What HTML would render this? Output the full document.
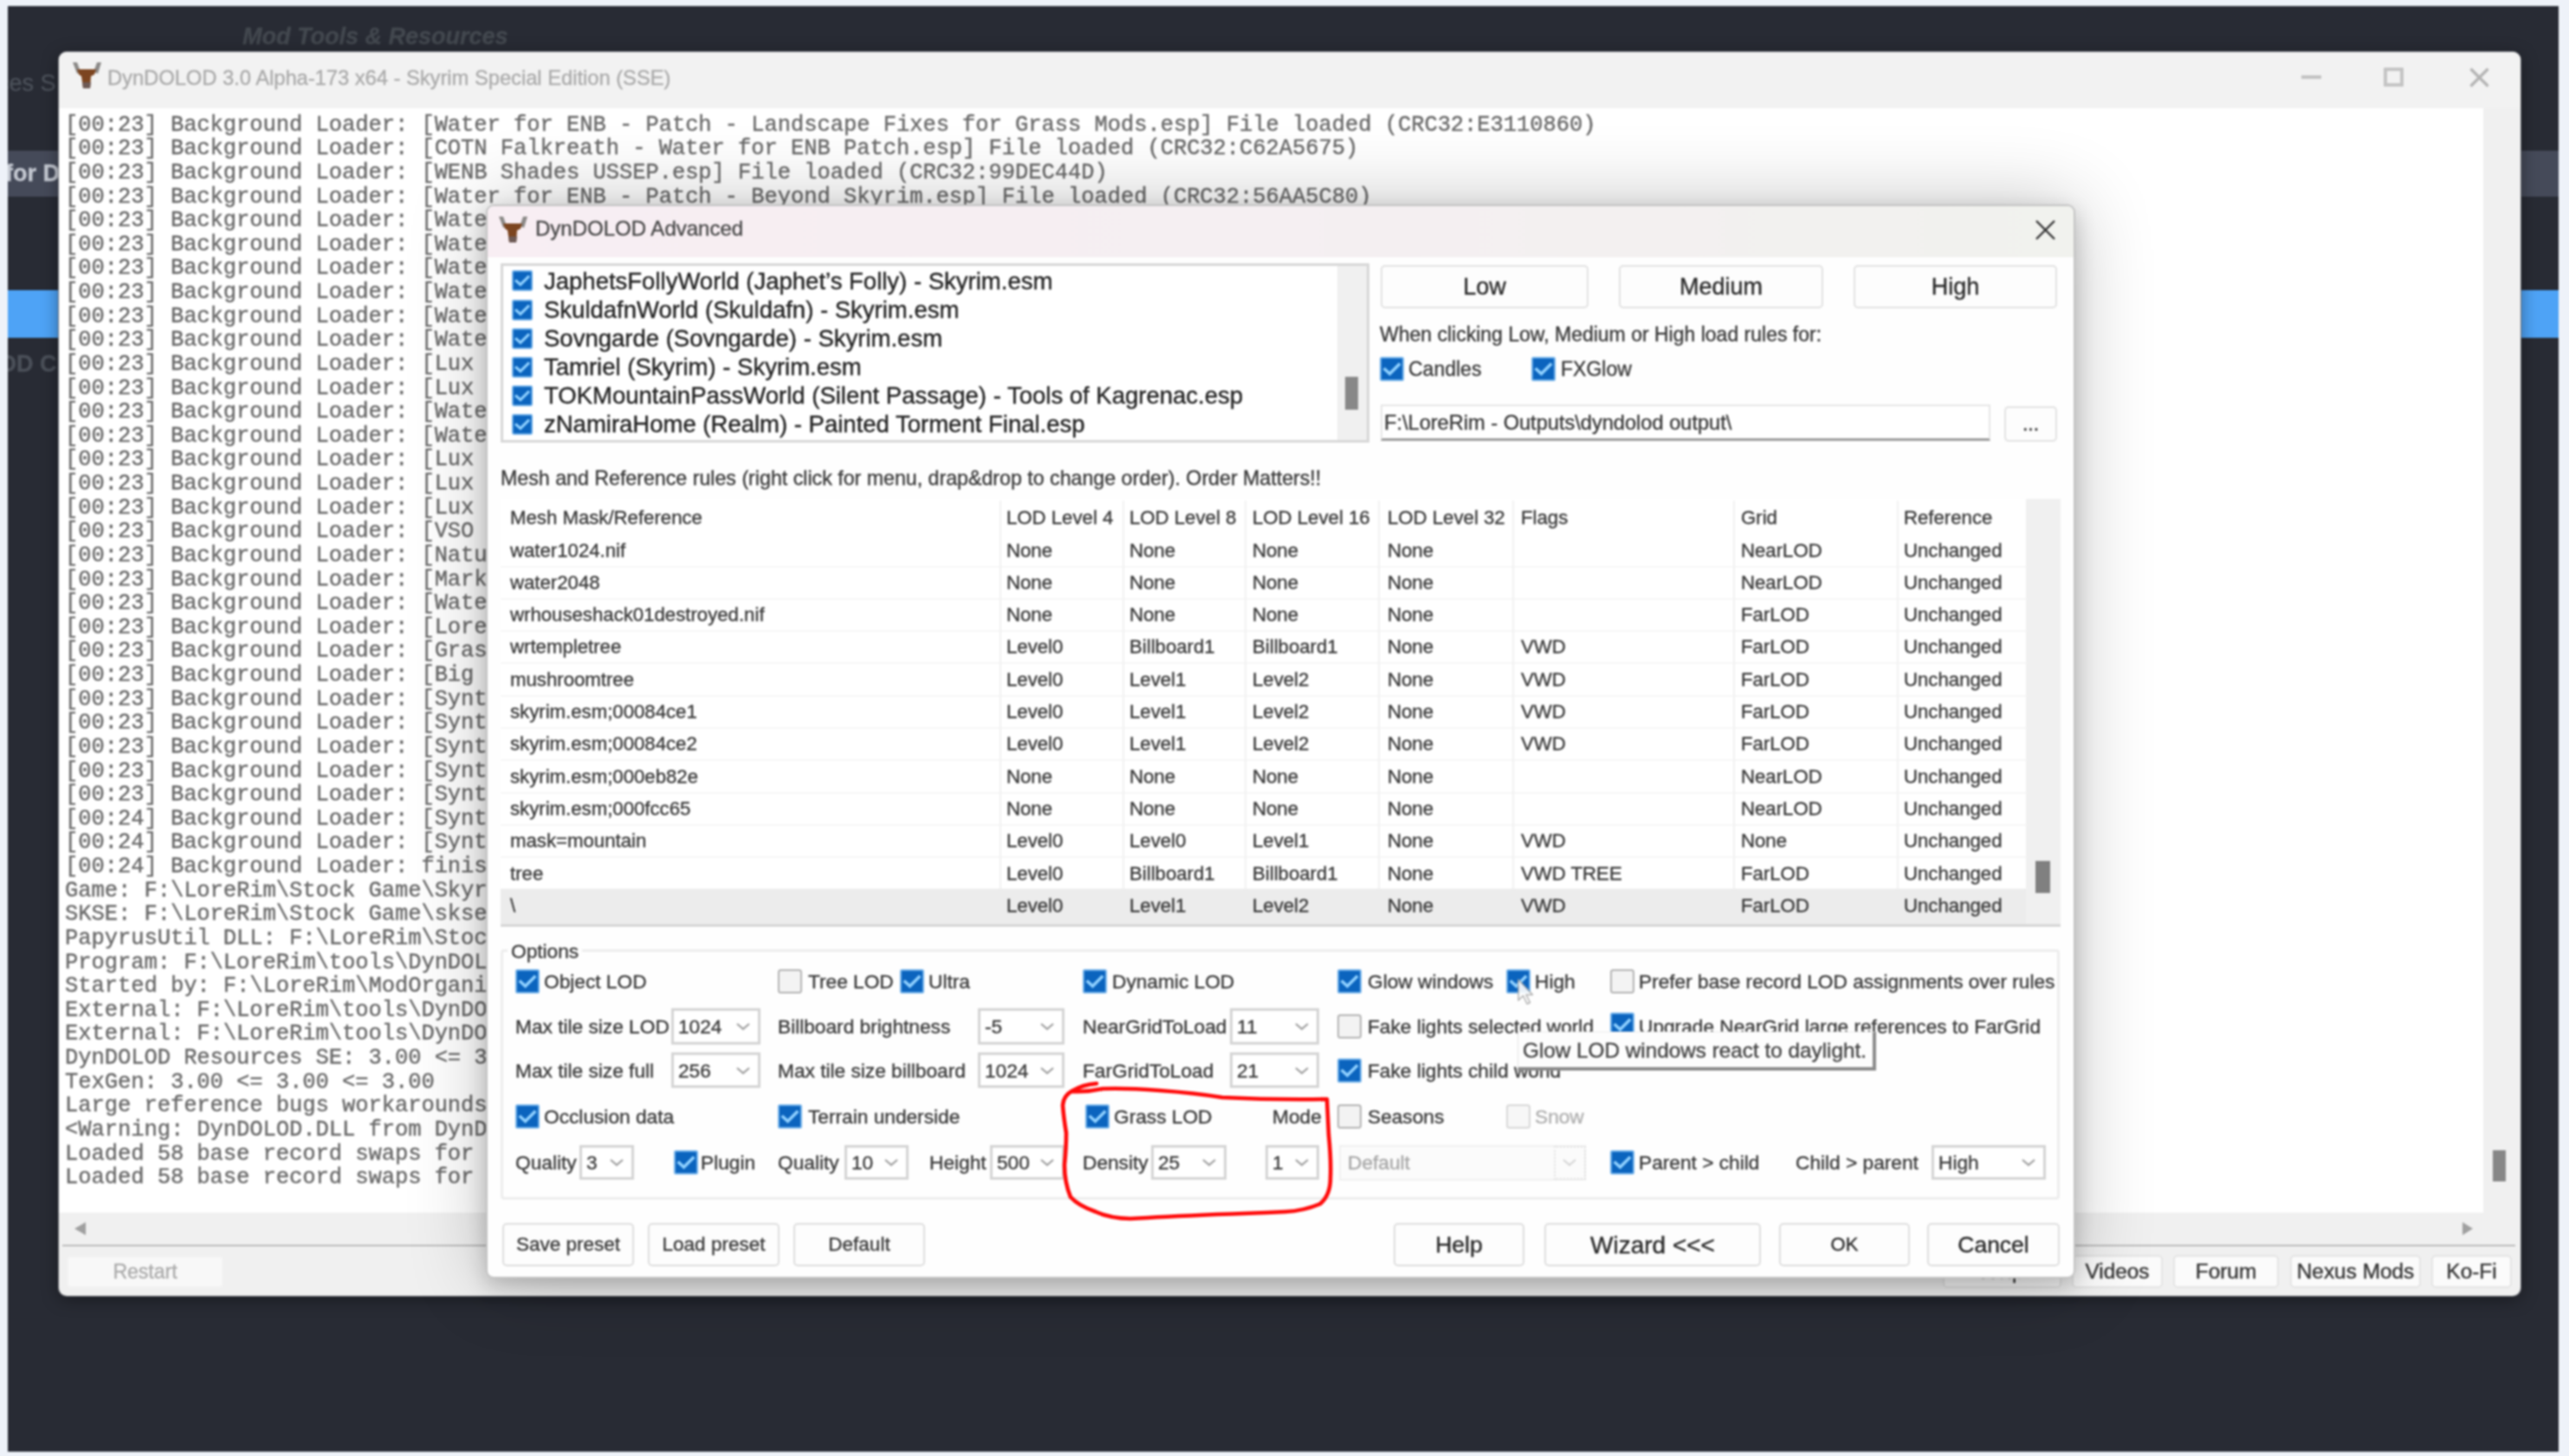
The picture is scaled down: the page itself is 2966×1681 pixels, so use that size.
<!DOCTYPE html><html><head><meta charset="utf-8"><style>html,body{margin:0;padding:0;width:2966px;height:1681px;overflow:hidden;background:#eef2f9;font-family:'Liberation Sans', sans-serif;} .t{-webkit-text-stroke:0.35px currentColor;}</style></head><body><div id="wrap" style="position:absolute;left:0;top:0;width:2966px;height:1681px;overflow:hidden;filter:blur(1px)">
<div style="position:absolute;left:9px;top:7px;width:2945px;height:1669px;background:#282b34"></div>
<div class="t" style="position:absolute;left:280px;top:25.0px;height:34px;line-height:34px;font-size:27px;color:#43484f;white-space:pre;text-align:left;font-weight:bold;font-style:italic">Mod Tools &amp; Resources</div>
<div style="position:absolute;left:9px;top:0;width:59px;height:1681px;overflow:hidden">
<div style="position:absolute;left:-9px;top:0;width:100px;height:1681px">
<div class="t" style="position:absolute;left:-3px;top:79.0px;height:34px;line-height:34px;font-size:27px;color:#4b5059;white-space:pre;text-align:left;">ces S</div>
<div style="position:absolute;left:0px;top:174px;width:100px;height:53px;background:#454a59"></div>
<div class="t" style="position:absolute;left:6px;top:183.0px;height:34px;line-height:34px;font-size:27px;color:#c5c9d2;white-space:pre;text-align:left;font-weight:bold">for D</div>
<div style="position:absolute;left:0px;top:335px;width:100px;height:55px;background:#4ea3f6"></div>
<div class="t" style="position:absolute;left:-2px;top:403.0px;height:34px;line-height:34px;font-size:27px;color:#4b5059;white-space:pre;text-align:left;font-weight:bold">OD C</div>
</div></div>
<div style="position:absolute;left:2910px;top:174px;width:44px;height:53px;background:#454a59"></div>
<div style="position:absolute;left:2910px;top:335px;width:44px;height:55px;background:#4ea3f6"></div>
<div style="position:absolute;left:68px;top:60px;width:2842px;height:1436px;border-radius:9px;background:#f0f0f0;box-shadow:0 0 0 1px #6b6e74, 0 4px 20px rgba(0,0,0,0.4)"></div>
<div style="position:absolute;left:68px;top:60px;width:2842px;height:65px;background:#f2f2f2;border-radius:9px 9px 0 0"></div>
<svg style="position:absolute;left:76px;top:66px" width="50" height="44" viewBox="0 0 50 44"><path d="M8 6 L13 6 L17 17 L13 19 Z" fill="#8c8a88"/><path d="M36 6 L41 6 L37 19 L32 17 Z" fill="#8c8a88"/><path d="M13 14 L35 14 L33 20 L29 22 L28 36 L20 36 L18 22 L15 20 Z" fill="#7c4520"/><path d="M19 29 L29 29 L28 36 L20 36 Z" fill="#6e5a55"/></svg>
<div class="t" style="position:absolute;left:124px;top:75.0px;height:30px;line-height:30px;font-size:23.7px;color:#ababab;white-space:pre;text-align:left;">DynDOLOD 3.0 Alpha-173 x64 - Skyrim Special Edition (SSE)</div>
<div style="position:absolute;left:2657px;top:87px;width:23px;height:4px;background:#c2c2c2"></div>
<div style="position:absolute;left:2752px;top:78px;width:23px;height:22px;box-sizing:border-box;border:4px solid #c4c4c4;border-radius:1px"></div>
<svg style="position:absolute;left:2851px;top:78px" width="23" height="23" viewBox="0 0 23 23"><path d="M1.5 1.5 L21.5 21.5 M21.5 1.5 L1.5 21.5" stroke="#b4b4b4" stroke-width="3.2"/></svg>
<div style="position:absolute;left:68px;top:125px;width:2799px;height:1275px;background:#ffffff"></div>
<div style="position:absolute;left:2867px;top:125px;width:43px;height:1275px;background:#f0f0f0"></div>
<div style="position:absolute;left:2878px;top:1328px;width:15px;height:36px;background:#878787"></div>
<div style="position:absolute;left:68px;top:1400px;width:2799px;height:38px;background:#f0f0f0"></div>
<svg style="position:absolute;left:86px;top:1411px" width="14" height="15" viewBox="0 0 14 15"><path d="M13 0 L0 7.5 L13 15Z" fill="#a0a0a0"/></svg>
<svg style="position:absolute;left:2843px;top:1411px" width="12" height="15" viewBox="0 0 12 15"><path d="M0 0 L12 7.5 L0 15Z" fill="#a0a0a0"/></svg>
<div style="position:absolute;left:72px;top:1437px;width:2832px;height:2px;background:#bdbdbd"></div>
<div style="position:absolute;left:77px;top:1450px;width:181px;height:37px;box-sizing:border-box;border:2px solid #f3f3f3;border-radius:5px;background:#f8f8f8"></div>
<div class="t" style="position:absolute;left:77px;top:1454.0px;width:181px;height:29px;line-height:29px;font-size:23px;color:#ababab;white-space:pre;text-align:center;">Restart</div>
<div style="position:absolute;left:2243px;top:1449px;width:137px;height:38px;box-sizing:border-box;border:2px solid #e4e4e4;border-radius:5px;background:#fbfbfb"></div>
<div class="t" style="position:absolute;left:2243px;top:1453.0px;width:137px;height:30px;line-height:30px;font-size:24.4px;color:#333;white-space:pre;text-align:center;">Help</div>
<div style="position:absolute;left:2392px;top:1449px;width:105px;height:38px;box-sizing:border-box;border:2px solid #e4e4e4;border-radius:5px;background:#fbfbfb"></div>
<div class="t" style="position:absolute;left:2392px;top:1453.0px;width:105px;height:30px;line-height:30px;font-size:24.4px;color:#333;white-space:pre;text-align:center;">Videos</div>
<div style="position:absolute;left:2509px;top:1449px;width:122px;height:38px;box-sizing:border-box;border:2px solid #e4e4e4;border-radius:5px;background:#fbfbfb"></div>
<div class="t" style="position:absolute;left:2509px;top:1453.0px;width:122px;height:30px;line-height:30px;font-size:24.4px;color:#333;white-space:pre;text-align:center;">Forum</div>
<div style="position:absolute;left:2644px;top:1449px;width:151px;height:38px;box-sizing:border-box;border:2px solid #e4e4e4;border-radius:5px;background:#fbfbfb"></div>
<div class="t" style="position:absolute;left:2644px;top:1453.0px;width:151px;height:30px;line-height:30px;font-size:24.4px;color:#333;white-space:pre;text-align:center;">Nexus Mods</div>
<div style="position:absolute;left:2807px;top:1449px;width:93px;height:38px;box-sizing:border-box;border:2px solid #e4e4e4;border-radius:5px;background:#fbfbfb"></div>
<div class="t" style="position:absolute;left:2807px;top:1453.0px;width:93px;height:30px;line-height:30px;font-size:24.4px;color:#333;white-space:pre;text-align:center;">Ko-Fi</div>
<div style="position:absolute;left:75px;top:125px;width:2790px;height:1275px;overflow:hidden">
<div style="position:absolute;left:0;top:5.69px;font-family:'Liberation Mono', monospace;font-size:25.4px;line-height:27.63px;color:#6a6a6a;-webkit-text-stroke:0.4px #6a6a6a;white-space:pre">[00:23] Background Loader: [Water for ENB - Patch - Landscape Fixes for Grass Mods.esp] File loaded (CRC32:E3110860)
[00:23] Background Loader: [COTN Falkreath - Water for ENB Patch.esp] File loaded (CRC32:C62A5675)
[00:23] Background Loader: [WENB Shades USSEP.esp] File loaded (CRC32:99DEC44D)
[00:23] Background Loader: [Water for ENB - Patch - Beyond Skyrim.esp] File loaded (CRC32:56AA5C80)
[00:23] Background Loader: [Water
[00:23] Background Loader: [Water
[00:23] Background Loader: [Water
[00:23] Background Loader: [Water
[00:23] Background Loader: [Water
[00:23] Background Loader: [Water
[00:23] Background Loader: [Lux O
[00:23] Background Loader: [Lux O
[00:23] Background Loader: [Water
[00:23] Background Loader: [Water
[00:23] Background Loader: [Lux O
[00:23] Background Loader: [Lux O
[00:23] Background Loader: [Lux O
[00:23] Background Loader: [VSO -
[00:23] Background Loader: [Natur
[00:23] Background Loader: [Marke
[00:23] Background Loader: [Water
[00:23] Background Loader: [LoreR
[00:23] Background Loader: [Grass
[00:23] Background Loader: [Big T
[00:23] Background Loader: [Synth
[00:23] Background Loader: [Synth
[00:23] Background Loader: [Synth
[00:23] Background Loader: [Synth
[00:23] Background Loader: [Synth
[00:24] Background Loader: [Synth
[00:24] Background Loader: [Synth
[00:24] Background Loader: finishe
Game: F:\LoreRim\Stock Game\Skyrim
SKSE: F:\LoreRim\Stock Game\skse6
PapyrusUtil DLL: F:\LoreRim\Stock 
Program: F:\LoreRim\tools\DynDOLOD
Started by: F:\LoreRim\ModOrganize
External: F:\LoreRim\tools\DynDOL
External: F:\LoreRim\tools\DynDOL
DynDOLOD Resources SE: 3.00 &lt;= 3.0
TexGen: 3.00 &lt;= 3.00 &lt;= 3.00
Large reference bugs workarounds 
&lt;Warning: DynDOLOD.DLL from DynDOL
Loaded 58 base record swaps for 
Loaded 58 base record swaps for </div>
</div>
<div style="position:absolute;left:561px;top:236px;width:1835px;height:1240px;box-sizing:border-box;border:2px solid #c4c4c4;border-radius:9px;background:#fefefe;box-shadow:0 8px 24px rgba(0,0,0,0.2), 0 0 90px rgba(0,0,0,0.24)"></div>
<div style="position:absolute;left:563px;top:238px;width:1831px;height:59px;background:linear-gradient(90deg,#f8eef3 0%,#f5eff2 50%,#f1f2ee 100%);border-radius:8px 8px 0 0"></div>
<svg style="position:absolute;left:568px;top:244px" width="50" height="44" viewBox="0 0 50 44"><path d="M8 6 L13 6 L17 17 L13 19 Z" fill="#8c8a88"/><path d="M36 6 L41 6 L37 19 L32 17 Z" fill="#8c8a88"/><path d="M13 14 L35 14 L33 20 L29 22 L28 36 L20 36 L18 22 L15 20 Z" fill="#7c4520"/><path d="M19 29 L29 29 L28 36 L20 36 Z" fill="#6e5a55"/></svg>
<div class="t" style="position:absolute;left:618px;top:249.0px;height:30px;line-height:30px;font-size:24px;color:#4a4a4a;white-space:pre;text-align:left;">DynDOLOD Advanced</div>
<svg style="position:absolute;left:2350px;top:254px" width="23" height="23" viewBox="0 0 23 23"><path d="M1 1 L22 22 M22 1 L1 22" stroke="#333" stroke-width="2.4"/></svg>
<div style="position:absolute;left:578px;top:304px;width:1003px;height:207px;box-sizing:border-box;border:3px solid #d7d7d7;background:#fff"></div>
<div style="position:absolute;left:1544px;top:307px;width:34px;height:201px;background:#f0f0f0"></div>
<div style="position:absolute;left:1553px;top:435px;width:15px;height:38px;background:#888"></div>
<svg style="position:absolute;left:591px;top:312px" width="24" height="24" viewBox="0 0 28 28"><rect x="1" y="1" width="26" height="26" rx="1.5" fill="#0b64be" stroke="#6fb0ea" stroke-width="2"/><path d="M6 14.5 L11.5 19.5 L22 9" fill="none" stroke="#8fd0ff" stroke-width="3.6" stroke-linecap="square"/></svg>
<div class="t" style="position:absolute;left:628px;top:307.5px;height:34px;line-height:34px;font-size:27.5px;color:#222;white-space:pre;text-align:left;">JaphetsFollyWorld (Japhet’s Folly) - Skyrim.esm</div>
<svg style="position:absolute;left:591px;top:346px" width="24" height="24" viewBox="0 0 28 28"><rect x="1" y="1" width="26" height="26" rx="1.5" fill="#0b64be" stroke="#6fb0ea" stroke-width="2"/><path d="M6 14.5 L11.5 19.5 L22 9" fill="none" stroke="#8fd0ff" stroke-width="3.6" stroke-linecap="square"/></svg>
<div class="t" style="position:absolute;left:628px;top:340.6px;height:34px;line-height:34px;font-size:27.5px;color:#222;white-space:pre;text-align:left;">SkuldafnWorld (Skuldafn) - Skyrim.esm</div>
<svg style="position:absolute;left:591px;top:379px" width="24" height="24" viewBox="0 0 28 28"><rect x="1" y="1" width="26" height="26" rx="1.5" fill="#0b64be" stroke="#6fb0ea" stroke-width="2"/><path d="M6 14.5 L11.5 19.5 L22 9" fill="none" stroke="#8fd0ff" stroke-width="3.6" stroke-linecap="square"/></svg>
<div class="t" style="position:absolute;left:628px;top:373.7px;height:34px;line-height:34px;font-size:27.5px;color:#222;white-space:pre;text-align:left;">Sovngarde (Sovngarde) - Skyrim.esm</div>
<svg style="position:absolute;left:591px;top:412px" width="24" height="24" viewBox="0 0 28 28"><rect x="1" y="1" width="26" height="26" rx="1.5" fill="#0b64be" stroke="#6fb0ea" stroke-width="2"/><path d="M6 14.5 L11.5 19.5 L22 9" fill="none" stroke="#8fd0ff" stroke-width="3.6" stroke-linecap="square"/></svg>
<div class="t" style="position:absolute;left:628px;top:406.8px;height:34px;line-height:34px;font-size:27.5px;color:#222;white-space:pre;text-align:left;">Tamriel (Skyrim) - Skyrim.esm</div>
<svg style="position:absolute;left:591px;top:445px" width="24" height="24" viewBox="0 0 28 28"><rect x="1" y="1" width="26" height="26" rx="1.5" fill="#0b64be" stroke="#6fb0ea" stroke-width="2"/><path d="M6 14.5 L11.5 19.5 L22 9" fill="none" stroke="#8fd0ff" stroke-width="3.6" stroke-linecap="square"/></svg>
<div class="t" style="position:absolute;left:628px;top:439.9px;height:34px;line-height:34px;font-size:27.5px;color:#222;white-space:pre;text-align:left;">TOKMountainPassWorld (Silent Passage) - Tools of Kagrenac.esp</div>
<svg style="position:absolute;left:591px;top:478px" width="24" height="24" viewBox="0 0 28 28"><rect x="1" y="1" width="26" height="26" rx="1.5" fill="#0b64be" stroke="#6fb0ea" stroke-width="2"/><path d="M6 14.5 L11.5 19.5 L22 9" fill="none" stroke="#8fd0ff" stroke-width="3.6" stroke-linecap="square"/></svg>
<div class="t" style="position:absolute;left:628px;top:473.0px;height:34px;line-height:34px;font-size:27.5px;color:#222;white-space:pre;text-align:left;">zNamiraHome (Realm) - Painted Torment Final.esp</div>
<div style="position:absolute;left:1594px;top:306px;width:240px;height:50px;box-sizing:border-box;border:2px solid #e2e2e2;border-radius:5px;background:#fdfdfd"></div>
<div class="t" style="position:absolute;left:1594px;top:314.0px;width:240px;height:34px;line-height:34px;font-size:27px;color:#2a2a2a;white-space:pre;text-align:center;">Low</div>
<div style="position:absolute;left:1869px;top:306px;width:236px;height:50px;box-sizing:border-box;border:2px solid #e2e2e2;border-radius:5px;background:#fdfdfd"></div>
<div class="t" style="position:absolute;left:1869px;top:314.0px;width:236px;height:34px;line-height:34px;font-size:27px;color:#2a2a2a;white-space:pre;text-align:center;">Medium</div>
<div style="position:absolute;left:2140px;top:306px;width:235px;height:50px;box-sizing:border-box;border:2px solid #e2e2e2;border-radius:5px;background:#fdfdfd"></div>
<div class="t" style="position:absolute;left:2140px;top:314.0px;width:235px;height:34px;line-height:34px;font-size:27px;color:#2a2a2a;white-space:pre;text-align:center;">High</div>
<div class="t" style="position:absolute;left:1593px;top:371.5px;height:29px;line-height:29px;font-size:23px;color:#3a3a3a;white-space:pre;text-align:left;">When clicking Low, Medium or High load rules for:</div>
<svg style="position:absolute;left:1593px;top:412px" width="28" height="28" viewBox="0 0 28 28"><rect x="1" y="1" width="26" height="26" rx="1.5" fill="#0b64be" stroke="#6fb0ea" stroke-width="2"/><path d="M6 14.5 L11.5 19.5 L22 9" fill="none" stroke="#8fd0ff" stroke-width="3.6" stroke-linecap="square"/></svg>
<div class="t" style="position:absolute;left:1626px;top:411.5px;height:29px;line-height:29px;font-size:23px;color:#3a3a3a;white-space:pre;text-align:left;">Candles</div>
<svg style="position:absolute;left:1768px;top:412px" width="28" height="28" viewBox="0 0 28 28"><rect x="1" y="1" width="26" height="26" rx="1.5" fill="#0b64be" stroke="#6fb0ea" stroke-width="2"/><path d="M6 14.5 L11.5 19.5 L22 9" fill="none" stroke="#8fd0ff" stroke-width="3.6" stroke-linecap="square"/></svg>
<div class="t" style="position:absolute;left:1802px;top:411.5px;height:29px;line-height:29px;font-size:23px;color:#3a3a3a;white-space:pre;text-align:left;">FXGlow</div>
<div style="position:absolute;left:1594px;top:467px;width:704px;height:42px;box-sizing:border-box;border:2px solid #e6e6e6;border-bottom:3px solid #9c9c9c;background:#fff"></div>
<div class="t" style="position:absolute;left:1598px;top:473.0px;height:30px;line-height:30px;font-size:23.6px;color:#3a3a3a;white-space:pre;text-align:left;">F:\LoreRim - Outputs\dyndolod output\</div>
<div style="position:absolute;left:2314px;top:469px;width:61px;height:41px;box-sizing:border-box;border:2px solid #e2e2e2;border-radius:5px;background:#fdfdfd"></div>
<div class="t" style="position:absolute;left:2314px;top:475.0px;width:61px;height:29px;line-height:29px;font-size:23px;color:#333;white-space:pre;text-align:center;">...</div>
<div class="t" style="position:absolute;left:578px;top:537.5px;height:29px;line-height:29px;font-size:23.2px;color:#3a3a3a;white-space:pre;text-align:left;">Mesh and Reference rules (right click for menu, drap&amp;drop to change order). Order Matters!!</div>
<div style="position:absolute;left:578px;top:576px;width:1801px;height:494px;background:#fff"></div>
<div style="position:absolute;left:1154px;top:578px;width:2px;height:450px;background:#f1f1f1"></div>
<div style="position:absolute;left:1296px;top:578px;width:2px;height:450px;background:#f1f1f1"></div>
<div style="position:absolute;left:1437px;top:578px;width:2px;height:450px;background:#f1f1f1"></div>
<div style="position:absolute;left:1591px;top:578px;width:2px;height:450px;background:#f1f1f1"></div>
<div style="position:absolute;left:1746px;top:578px;width:2px;height:450px;background:#f1f1f1"></div>
<div style="position:absolute;left:2001px;top:578px;width:2px;height:450px;background:#f1f1f1"></div>
<div style="position:absolute;left:2190px;top:578px;width:2px;height:450px;background:#f1f1f1"></div>
<div class="t" style="position:absolute;left:589px;top:584.0px;height:28px;line-height:28px;font-size:22.2px;color:#3a3a3a;white-space:pre;text-align:left;">Mesh Mask/Reference</div>
<div class="t" style="position:absolute;left:1162px;top:584.0px;height:28px;line-height:28px;font-size:22.2px;color:#3a3a3a;white-space:pre;text-align:left;">LOD Level 4</div>
<div class="t" style="position:absolute;left:1304px;top:584.0px;height:28px;line-height:28px;font-size:22.2px;color:#3a3a3a;white-space:pre;text-align:left;">LOD Level 8</div>
<div class="t" style="position:absolute;left:1446px;top:584.0px;height:28px;line-height:28px;font-size:22.2px;color:#3a3a3a;white-space:pre;text-align:left;">LOD Level 16</div>
<div class="t" style="position:absolute;left:1602px;top:584.0px;height:28px;line-height:28px;font-size:22.2px;color:#3a3a3a;white-space:pre;text-align:left;">LOD Level 32</div>
<div class="t" style="position:absolute;left:1756px;top:584.0px;height:28px;line-height:28px;font-size:22.2px;color:#3a3a3a;white-space:pre;text-align:left;">Flags</div>
<div class="t" style="position:absolute;left:2010px;top:584.0px;height:28px;line-height:28px;font-size:22.2px;color:#3a3a3a;white-space:pre;text-align:left;">Grid</div>
<div class="t" style="position:absolute;left:2198px;top:584.0px;height:28px;line-height:28px;font-size:22.2px;color:#3a3a3a;white-space:pre;text-align:left;">Reference</div>
<div style="position:absolute;left:578px;top:654px;width:1761px;height:1px;background:#f0f0f0"></div>
<div class="t" style="position:absolute;left:589px;top:621.5px;height:28px;line-height:28px;font-size:22.2px;color:#3a3a3a;white-space:pre;text-align:left;">water1024.nif</div>
<div class="t" style="position:absolute;left:1162px;top:621.5px;height:28px;line-height:28px;font-size:22.2px;color:#3a3a3a;white-space:pre;text-align:left;">None</div>
<div class="t" style="position:absolute;left:1304px;top:621.5px;height:28px;line-height:28px;font-size:22.2px;color:#3a3a3a;white-space:pre;text-align:left;">None</div>
<div class="t" style="position:absolute;left:1446px;top:621.5px;height:28px;line-height:28px;font-size:22.2px;color:#3a3a3a;white-space:pre;text-align:left;">None</div>
<div class="t" style="position:absolute;left:1602px;top:621.5px;height:28px;line-height:28px;font-size:22.2px;color:#3a3a3a;white-space:pre;text-align:left;">None</div>
<div class="t" style="position:absolute;left:1756px;top:621.5px;height:28px;line-height:28px;font-size:22.2px;color:#3a3a3a;white-space:pre;text-align:left;"></div>
<div class="t" style="position:absolute;left:2010px;top:621.5px;height:28px;line-height:28px;font-size:22.2px;color:#3a3a3a;white-space:pre;text-align:left;">NearLOD</div>
<div class="t" style="position:absolute;left:2198px;top:621.5px;height:28px;line-height:28px;font-size:22.2px;color:#3a3a3a;white-space:pre;text-align:left;">Unchanged</div>
<div style="position:absolute;left:578px;top:691px;width:1761px;height:1px;background:#f0f0f0"></div>
<div class="t" style="position:absolute;left:589px;top:658.8px;height:28px;line-height:28px;font-size:22.2px;color:#3a3a3a;white-space:pre;text-align:left;">water2048</div>
<div class="t" style="position:absolute;left:1162px;top:658.8px;height:28px;line-height:28px;font-size:22.2px;color:#3a3a3a;white-space:pre;text-align:left;">None</div>
<div class="t" style="position:absolute;left:1304px;top:658.8px;height:28px;line-height:28px;font-size:22.2px;color:#3a3a3a;white-space:pre;text-align:left;">None</div>
<div class="t" style="position:absolute;left:1446px;top:658.8px;height:28px;line-height:28px;font-size:22.2px;color:#3a3a3a;white-space:pre;text-align:left;">None</div>
<div class="t" style="position:absolute;left:1602px;top:658.8px;height:28px;line-height:28px;font-size:22.2px;color:#3a3a3a;white-space:pre;text-align:left;">None</div>
<div class="t" style="position:absolute;left:1756px;top:658.8px;height:28px;line-height:28px;font-size:22.2px;color:#3a3a3a;white-space:pre;text-align:left;"></div>
<div class="t" style="position:absolute;left:2010px;top:658.8px;height:28px;line-height:28px;font-size:22.2px;color:#3a3a3a;white-space:pre;text-align:left;">NearLOD</div>
<div class="t" style="position:absolute;left:2198px;top:658.8px;height:28px;line-height:28px;font-size:22.2px;color:#3a3a3a;white-space:pre;text-align:left;">Unchanged</div>
<div style="position:absolute;left:578px;top:728px;width:1761px;height:1px;background:#f0f0f0"></div>
<div class="t" style="position:absolute;left:589px;top:696.1px;height:28px;line-height:28px;font-size:22.2px;color:#3a3a3a;white-space:pre;text-align:left;">wrhouseshack01destroyed.nif</div>
<div class="t" style="position:absolute;left:1162px;top:696.1px;height:28px;line-height:28px;font-size:22.2px;color:#3a3a3a;white-space:pre;text-align:left;">None</div>
<div class="t" style="position:absolute;left:1304px;top:696.1px;height:28px;line-height:28px;font-size:22.2px;color:#3a3a3a;white-space:pre;text-align:left;">None</div>
<div class="t" style="position:absolute;left:1446px;top:696.1px;height:28px;line-height:28px;font-size:22.2px;color:#3a3a3a;white-space:pre;text-align:left;">None</div>
<div class="t" style="position:absolute;left:1602px;top:696.1px;height:28px;line-height:28px;font-size:22.2px;color:#3a3a3a;white-space:pre;text-align:left;">None</div>
<div class="t" style="position:absolute;left:1756px;top:696.1px;height:28px;line-height:28px;font-size:22.2px;color:#3a3a3a;white-space:pre;text-align:left;"></div>
<div class="t" style="position:absolute;left:2010px;top:696.1px;height:28px;line-height:28px;font-size:22.2px;color:#3a3a3a;white-space:pre;text-align:left;">FarLOD</div>
<div class="t" style="position:absolute;left:2198px;top:696.1px;height:28px;line-height:28px;font-size:22.2px;color:#3a3a3a;white-space:pre;text-align:left;">Unchanged</div>
<div style="position:absolute;left:578px;top:765px;width:1761px;height:1px;background:#f0f0f0"></div>
<div class="t" style="position:absolute;left:589px;top:733.4px;height:28px;line-height:28px;font-size:22.2px;color:#3a3a3a;white-space:pre;text-align:left;">wrtempletree</div>
<div class="t" style="position:absolute;left:1162px;top:733.4px;height:28px;line-height:28px;font-size:22.2px;color:#3a3a3a;white-space:pre;text-align:left;">Level0</div>
<div class="t" style="position:absolute;left:1304px;top:733.4px;height:28px;line-height:28px;font-size:22.2px;color:#3a3a3a;white-space:pre;text-align:left;">Billboard1</div>
<div class="t" style="position:absolute;left:1446px;top:733.4px;height:28px;line-height:28px;font-size:22.2px;color:#3a3a3a;white-space:pre;text-align:left;">Billboard1</div>
<div class="t" style="position:absolute;left:1602px;top:733.4px;height:28px;line-height:28px;font-size:22.2px;color:#3a3a3a;white-space:pre;text-align:left;">None</div>
<div class="t" style="position:absolute;left:1756px;top:733.4px;height:28px;line-height:28px;font-size:22.2px;color:#3a3a3a;white-space:pre;text-align:left;">VWD</div>
<div class="t" style="position:absolute;left:2010px;top:733.4px;height:28px;line-height:28px;font-size:22.2px;color:#3a3a3a;white-space:pre;text-align:left;">FarLOD</div>
<div class="t" style="position:absolute;left:2198px;top:733.4px;height:28px;line-height:28px;font-size:22.2px;color:#3a3a3a;white-space:pre;text-align:left;">Unchanged</div>
<div style="position:absolute;left:578px;top:803px;width:1761px;height:1px;background:#f0f0f0"></div>
<div class="t" style="position:absolute;left:589px;top:770.7px;height:28px;line-height:28px;font-size:22.2px;color:#3a3a3a;white-space:pre;text-align:left;">mushroomtree</div>
<div class="t" style="position:absolute;left:1162px;top:770.7px;height:28px;line-height:28px;font-size:22.2px;color:#3a3a3a;white-space:pre;text-align:left;">Level0</div>
<div class="t" style="position:absolute;left:1304px;top:770.7px;height:28px;line-height:28px;font-size:22.2px;color:#3a3a3a;white-space:pre;text-align:left;">Level1</div>
<div class="t" style="position:absolute;left:1446px;top:770.7px;height:28px;line-height:28px;font-size:22.2px;color:#3a3a3a;white-space:pre;text-align:left;">Level2</div>
<div class="t" style="position:absolute;left:1602px;top:770.7px;height:28px;line-height:28px;font-size:22.2px;color:#3a3a3a;white-space:pre;text-align:left;">None</div>
<div class="t" style="position:absolute;left:1756px;top:770.7px;height:28px;line-height:28px;font-size:22.2px;color:#3a3a3a;white-space:pre;text-align:left;">VWD</div>
<div class="t" style="position:absolute;left:2010px;top:770.7px;height:28px;line-height:28px;font-size:22.2px;color:#3a3a3a;white-space:pre;text-align:left;">FarLOD</div>
<div class="t" style="position:absolute;left:2198px;top:770.7px;height:28px;line-height:28px;font-size:22.2px;color:#3a3a3a;white-space:pre;text-align:left;">Unchanged</div>
<div style="position:absolute;left:578px;top:840px;width:1761px;height:1px;background:#f0f0f0"></div>
<div class="t" style="position:absolute;left:589px;top:808.0px;height:28px;line-height:28px;font-size:22.2px;color:#3a3a3a;white-space:pre;text-align:left;">skyrim.esm;00084ce1</div>
<div class="t" style="position:absolute;left:1162px;top:808.0px;height:28px;line-height:28px;font-size:22.2px;color:#3a3a3a;white-space:pre;text-align:left;">Level0</div>
<div class="t" style="position:absolute;left:1304px;top:808.0px;height:28px;line-height:28px;font-size:22.2px;color:#3a3a3a;white-space:pre;text-align:left;">Level1</div>
<div class="t" style="position:absolute;left:1446px;top:808.0px;height:28px;line-height:28px;font-size:22.2px;color:#3a3a3a;white-space:pre;text-align:left;">Level2</div>
<div class="t" style="position:absolute;left:1602px;top:808.0px;height:28px;line-height:28px;font-size:22.2px;color:#3a3a3a;white-space:pre;text-align:left;">None</div>
<div class="t" style="position:absolute;left:1756px;top:808.0px;height:28px;line-height:28px;font-size:22.2px;color:#3a3a3a;white-space:pre;text-align:left;">VWD</div>
<div class="t" style="position:absolute;left:2010px;top:808.0px;height:28px;line-height:28px;font-size:22.2px;color:#3a3a3a;white-space:pre;text-align:left;">FarLOD</div>
<div class="t" style="position:absolute;left:2198px;top:808.0px;height:28px;line-height:28px;font-size:22.2px;color:#3a3a3a;white-space:pre;text-align:left;">Unchanged</div>
<div style="position:absolute;left:578px;top:877px;width:1761px;height:1px;background:#f0f0f0"></div>
<div class="t" style="position:absolute;left:589px;top:845.3px;height:28px;line-height:28px;font-size:22.2px;color:#3a3a3a;white-space:pre;text-align:left;">skyrim.esm;00084ce2</div>
<div class="t" style="position:absolute;left:1162px;top:845.3px;height:28px;line-height:28px;font-size:22.2px;color:#3a3a3a;white-space:pre;text-align:left;">Level0</div>
<div class="t" style="position:absolute;left:1304px;top:845.3px;height:28px;line-height:28px;font-size:22.2px;color:#3a3a3a;white-space:pre;text-align:left;">Level1</div>
<div class="t" style="position:absolute;left:1446px;top:845.3px;height:28px;line-height:28px;font-size:22.2px;color:#3a3a3a;white-space:pre;text-align:left;">Level2</div>
<div class="t" style="position:absolute;left:1602px;top:845.3px;height:28px;line-height:28px;font-size:22.2px;color:#3a3a3a;white-space:pre;text-align:left;">None</div>
<div class="t" style="position:absolute;left:1756px;top:845.3px;height:28px;line-height:28px;font-size:22.2px;color:#3a3a3a;white-space:pre;text-align:left;">VWD</div>
<div class="t" style="position:absolute;left:2010px;top:845.3px;height:28px;line-height:28px;font-size:22.2px;color:#3a3a3a;white-space:pre;text-align:left;">FarLOD</div>
<div class="t" style="position:absolute;left:2198px;top:845.3px;height:28px;line-height:28px;font-size:22.2px;color:#3a3a3a;white-space:pre;text-align:left;">Unchanged</div>
<div style="position:absolute;left:578px;top:915px;width:1761px;height:1px;background:#f0f0f0"></div>
<div class="t" style="position:absolute;left:589px;top:882.6px;height:28px;line-height:28px;font-size:22.2px;color:#3a3a3a;white-space:pre;text-align:left;">skyrim.esm;000eb82e</div>
<div class="t" style="position:absolute;left:1162px;top:882.6px;height:28px;line-height:28px;font-size:22.2px;color:#3a3a3a;white-space:pre;text-align:left;">None</div>
<div class="t" style="position:absolute;left:1304px;top:882.6px;height:28px;line-height:28px;font-size:22.2px;color:#3a3a3a;white-space:pre;text-align:left;">None</div>
<div class="t" style="position:absolute;left:1446px;top:882.6px;height:28px;line-height:28px;font-size:22.2px;color:#3a3a3a;white-space:pre;text-align:left;">None</div>
<div class="t" style="position:absolute;left:1602px;top:882.6px;height:28px;line-height:28px;font-size:22.2px;color:#3a3a3a;white-space:pre;text-align:left;">None</div>
<div class="t" style="position:absolute;left:1756px;top:882.6px;height:28px;line-height:28px;font-size:22.2px;color:#3a3a3a;white-space:pre;text-align:left;"></div>
<div class="t" style="position:absolute;left:2010px;top:882.6px;height:28px;line-height:28px;font-size:22.2px;color:#3a3a3a;white-space:pre;text-align:left;">NearLOD</div>
<div class="t" style="position:absolute;left:2198px;top:882.6px;height:28px;line-height:28px;font-size:22.2px;color:#3a3a3a;white-space:pre;text-align:left;">Unchanged</div>
<div style="position:absolute;left:578px;top:952px;width:1761px;height:1px;background:#f0f0f0"></div>
<div class="t" style="position:absolute;left:589px;top:919.9px;height:28px;line-height:28px;font-size:22.2px;color:#3a3a3a;white-space:pre;text-align:left;">skyrim.esm;000fcc65</div>
<div class="t" style="position:absolute;left:1162px;top:919.9px;height:28px;line-height:28px;font-size:22.2px;color:#3a3a3a;white-space:pre;text-align:left;">None</div>
<div class="t" style="position:absolute;left:1304px;top:919.9px;height:28px;line-height:28px;font-size:22.2px;color:#3a3a3a;white-space:pre;text-align:left;">None</div>
<div class="t" style="position:absolute;left:1446px;top:919.9px;height:28px;line-height:28px;font-size:22.2px;color:#3a3a3a;white-space:pre;text-align:left;">None</div>
<div class="t" style="position:absolute;left:1602px;top:919.9px;height:28px;line-height:28px;font-size:22.2px;color:#3a3a3a;white-space:pre;text-align:left;">None</div>
<div class="t" style="position:absolute;left:1756px;top:919.9px;height:28px;line-height:28px;font-size:22.2px;color:#3a3a3a;white-space:pre;text-align:left;"></div>
<div class="t" style="position:absolute;left:2010px;top:919.9px;height:28px;line-height:28px;font-size:22.2px;color:#3a3a3a;white-space:pre;text-align:left;">NearLOD</div>
<div class="t" style="position:absolute;left:2198px;top:919.9px;height:28px;line-height:28px;font-size:22.2px;color:#3a3a3a;white-space:pre;text-align:left;">Unchanged</div>
<div style="position:absolute;left:578px;top:989px;width:1761px;height:1px;background:#f0f0f0"></div>
<div class="t" style="position:absolute;left:589px;top:957.2px;height:28px;line-height:28px;font-size:22.2px;color:#3a3a3a;white-space:pre;text-align:left;">mask=mountain</div>
<div class="t" style="position:absolute;left:1162px;top:957.2px;height:28px;line-height:28px;font-size:22.2px;color:#3a3a3a;white-space:pre;text-align:left;">Level0</div>
<div class="t" style="position:absolute;left:1304px;top:957.2px;height:28px;line-height:28px;font-size:22.2px;color:#3a3a3a;white-space:pre;text-align:left;">Level0</div>
<div class="t" style="position:absolute;left:1446px;top:957.2px;height:28px;line-height:28px;font-size:22.2px;color:#3a3a3a;white-space:pre;text-align:left;">Level1</div>
<div class="t" style="position:absolute;left:1602px;top:957.2px;height:28px;line-height:28px;font-size:22.2px;color:#3a3a3a;white-space:pre;text-align:left;">None</div>
<div class="t" style="position:absolute;left:1756px;top:957.2px;height:28px;line-height:28px;font-size:22.2px;color:#3a3a3a;white-space:pre;text-align:left;">VWD</div>
<div class="t" style="position:absolute;left:2010px;top:957.2px;height:28px;line-height:28px;font-size:22.2px;color:#3a3a3a;white-space:pre;text-align:left;">None</div>
<div class="t" style="position:absolute;left:2198px;top:957.2px;height:28px;line-height:28px;font-size:22.2px;color:#3a3a3a;white-space:pre;text-align:left;">Unchanged</div>
<div style="position:absolute;left:578px;top:1026px;width:1761px;height:1px;background:#f0f0f0"></div>
<div class="t" style="position:absolute;left:589px;top:994.5px;height:28px;line-height:28px;font-size:22.2px;color:#3a3a3a;white-space:pre;text-align:left;">tree</div>
<div class="t" style="position:absolute;left:1162px;top:994.5px;height:28px;line-height:28px;font-size:22.2px;color:#3a3a3a;white-space:pre;text-align:left;">Level0</div>
<div class="t" style="position:absolute;left:1304px;top:994.5px;height:28px;line-height:28px;font-size:22.2px;color:#3a3a3a;white-space:pre;text-align:left;">Billboard1</div>
<div class="t" style="position:absolute;left:1446px;top:994.5px;height:28px;line-height:28px;font-size:22.2px;color:#3a3a3a;white-space:pre;text-align:left;">Billboard1</div>
<div class="t" style="position:absolute;left:1602px;top:994.5px;height:28px;line-height:28px;font-size:22.2px;color:#3a3a3a;white-space:pre;text-align:left;">None</div>
<div class="t" style="position:absolute;left:1756px;top:994.5px;height:28px;line-height:28px;font-size:22.2px;color:#3a3a3a;white-space:pre;text-align:left;">VWD TREE</div>
<div class="t" style="position:absolute;left:2010px;top:994.5px;height:28px;line-height:28px;font-size:22.2px;color:#3a3a3a;white-space:pre;text-align:left;">FarLOD</div>
<div class="t" style="position:absolute;left:2198px;top:994.5px;height:28px;line-height:28px;font-size:22.2px;color:#3a3a3a;white-space:pre;text-align:left;">Unchanged</div>
<div style="position:absolute;left:578px;top:1026px;width:1761px;height:42px;background:#ececec"></div>
<div class="t" style="position:absolute;left:589px;top:1031.8px;height:28px;line-height:28px;font-size:22.2px;color:#3a3a3a;white-space:pre;text-align:left;">\</div>
<div class="t" style="position:absolute;left:1162px;top:1031.8px;height:28px;line-height:28px;font-size:22.2px;color:#3a3a3a;white-space:pre;text-align:left;">Level0</div>
<div class="t" style="position:absolute;left:1304px;top:1031.8px;height:28px;line-height:28px;font-size:22.2px;color:#3a3a3a;white-space:pre;text-align:left;">Level1</div>
<div class="t" style="position:absolute;left:1446px;top:1031.8px;height:28px;line-height:28px;font-size:22.2px;color:#3a3a3a;white-space:pre;text-align:left;">Level2</div>
<div class="t" style="position:absolute;left:1602px;top:1031.8px;height:28px;line-height:28px;font-size:22.2px;color:#3a3a3a;white-space:pre;text-align:left;">None</div>
<div class="t" style="position:absolute;left:1756px;top:1031.8px;height:28px;line-height:28px;font-size:22.2px;color:#3a3a3a;white-space:pre;text-align:left;">VWD</div>
<div class="t" style="position:absolute;left:2010px;top:1031.8px;height:28px;line-height:28px;font-size:22.2px;color:#3a3a3a;white-space:pre;text-align:left;">FarLOD</div>
<div class="t" style="position:absolute;left:2198px;top:1031.8px;height:28px;line-height:28px;font-size:22.2px;color:#3a3a3a;white-space:pre;text-align:left;">Unchanged</div>
<div style="position:absolute;left:2339px;top:576px;width:40px;height:493px;background:#f0f0f0"></div>
<div style="position:absolute;left:2350px;top:994px;width:17px;height:37px;background:#808080"></div>
<div style="position:absolute;left:578px;top:1067px;width:1801px;height:3px;background:#d6d6d6"></div>
<div style="position:absolute;left:578px;top:1096px;width:1800px;height:289px;box-sizing:border-box;border:3px solid #ededed;border-radius:4px"></div>
<div style="position:absolute;left:586px;top:1086px;width:86px;height:22px;background:#fefefe"></div>
<div class="t" style="position:absolute;left:590px;top:1084.0px;height:28px;line-height:28px;font-size:22.7px;color:#3a3a3a;white-space:pre;text-align:left;">Options</div>
<svg style="position:absolute;left:595px;top:1119px" width="28" height="28" viewBox="0 0 28 28"><rect x="1" y="1" width="26" height="26" rx="1.5" fill="#0b64be" stroke="#6fb0ea" stroke-width="2"/><path d="M6 14.5 L11.5 19.5 L22 9" fill="none" stroke="#8fd0ff" stroke-width="3.6" stroke-linecap="square"/></svg>
<div class="t" style="position:absolute;left:628px;top:1119.0px;height:28px;line-height:28px;font-size:22.7px;color:#3a3a3a;white-space:pre;text-align:left;">Object LOD</div>
<svg style="position:absolute;left:898px;top:1119px" width="28" height="28" viewBox="0 0 28 28"><rect x="1" y="1" width="26" height="26" rx="2.5" fill="#f3f3f3" stroke="#b4b4b4" stroke-width="2"/></svg>
<div class="t" style="position:absolute;left:933px;top:1119.0px;height:28px;line-height:28px;font-size:22.7px;color:#3a3a3a;white-space:pre;text-align:left;">Tree LOD</div>
<svg style="position:absolute;left:1039px;top:1119px" width="28" height="28" viewBox="0 0 28 28"><rect x="1" y="1" width="26" height="26" rx="1.5" fill="#0b64be" stroke="#6fb0ea" stroke-width="2"/><path d="M6 14.5 L11.5 19.5 L22 9" fill="none" stroke="#8fd0ff" stroke-width="3.6" stroke-linecap="square"/></svg>
<div class="t" style="position:absolute;left:1072px;top:1119.0px;height:28px;line-height:28px;font-size:22.7px;color:#3a3a3a;white-space:pre;text-align:left;">Ultra</div>
<svg style="position:absolute;left:1250px;top:1119px" width="28" height="28" viewBox="0 0 28 28"><rect x="1" y="1" width="26" height="26" rx="1.5" fill="#0b64be" stroke="#6fb0ea" stroke-width="2"/><path d="M6 14.5 L11.5 19.5 L22 9" fill="none" stroke="#8fd0ff" stroke-width="3.6" stroke-linecap="square"/></svg>
<div class="t" style="position:absolute;left:1284px;top:1119.0px;height:28px;line-height:28px;font-size:22.7px;color:#3a3a3a;white-space:pre;text-align:left;">Dynamic LOD</div>
<svg style="position:absolute;left:1544px;top:1119px" width="28" height="28" viewBox="0 0 28 28"><rect x="1" y="1" width="26" height="26" rx="1.5" fill="#0b64be" stroke="#6fb0ea" stroke-width="2"/><path d="M6 14.5 L11.5 19.5 L22 9" fill="none" stroke="#8fd0ff" stroke-width="3.6" stroke-linecap="square"/></svg>
<div class="t" style="position:absolute;left:1579px;top:1119.0px;height:28px;line-height:28px;font-size:22.7px;color:#3a3a3a;white-space:pre;text-align:left;">Glow windows</div>
<svg style="position:absolute;left:1739px;top:1119px" width="28" height="28" viewBox="0 0 28 28"><rect x="1" y="1" width="26" height="26" rx="1.5" fill="#0b64be" stroke="#6fb0ea" stroke-width="2"/><path d="M6 14.5 L11.5 19.5 L22 9" fill="none" stroke="#8fd0ff" stroke-width="3.6" stroke-linecap="square"/></svg>
<div class="t" style="position:absolute;left:1772px;top:1119.0px;height:28px;line-height:28px;font-size:22.7px;color:#3a3a3a;white-space:pre;text-align:left;">High</div>
<svg style="position:absolute;left:1859px;top:1119px" width="28" height="28" viewBox="0 0 28 28"><rect x="1" y="1" width="26" height="26" rx="2.5" fill="#f3f3f3" stroke="#b4b4b4" stroke-width="2"/></svg>
<div class="t" style="position:absolute;left:1892px;top:1119.0px;height:28px;line-height:28px;font-size:22.7px;color:#3a3a3a;white-space:pre;text-align:left;">Prefer base record LOD assignments over rules</div>
<div class="t" style="position:absolute;left:595px;top:1171.0px;height:28px;line-height:28px;font-size:22.7px;color:#3a3a3a;white-space:pre;text-align:left;">Max tile size LOD</div>
<div style="position:absolute;left:775px;top:1164px;width:103px;height:42px;box-sizing:border-box;border:3px solid #d4d4d4;background:#fff"></div>
<div class="t" style="position:absolute;left:783px;top:1171.0px;height:28px;line-height:28px;font-size:22.7px;color:#3c3c3c;white-space:pre;text-align:left;">1024</div>
<svg style="position:absolute;left:849px;top:1179.0px" width="18" height="12" viewBox="0 0 18 12"><path d="M2 3 L9 9 L16 3" fill="none" stroke="#a0a0a0" stroke-width="2.2"/></svg>
<div class="t" style="position:absolute;left:898px;top:1171.0px;height:28px;line-height:28px;font-size:22.7px;color:#3a3a3a;white-space:pre;text-align:left;">Billboard brightness</div>
<div style="position:absolute;left:1129px;top:1164px;width:100px;height:42px;box-sizing:border-box;border:3px solid #d4d4d4;background:#fff"></div>
<div class="t" style="position:absolute;left:1137px;top:1171.0px;height:28px;line-height:28px;font-size:22.7px;color:#3c3c3c;white-space:pre;text-align:left;">-5</div>
<svg style="position:absolute;left:1200px;top:1179.0px" width="18" height="12" viewBox="0 0 18 12"><path d="M2 3 L9 9 L16 3" fill="none" stroke="#a0a0a0" stroke-width="2.2"/></svg>
<div class="t" style="position:absolute;left:1250px;top:1171.0px;height:28px;line-height:28px;font-size:22.7px;color:#3a3a3a;white-space:pre;text-align:left;">NearGridToLoad</div>
<div style="position:absolute;left:1420px;top:1164px;width:103px;height:42px;box-sizing:border-box;border:3px solid #d4d4d4;background:#fff"></div>
<div class="t" style="position:absolute;left:1428px;top:1171.0px;height:28px;line-height:28px;font-size:22.7px;color:#3c3c3c;white-space:pre;text-align:left;">11</div>
<svg style="position:absolute;left:1494px;top:1179.0px" width="18" height="12" viewBox="0 0 18 12"><path d="M2 3 L9 9 L16 3" fill="none" stroke="#a0a0a0" stroke-width="2.2"/></svg>
<svg style="position:absolute;left:1544px;top:1171px" width="28" height="28" viewBox="0 0 28 28"><rect x="1" y="1" width="26" height="26" rx="2.5" fill="#f3f3f3" stroke="#b4b4b4" stroke-width="2"/></svg>
<div class="t" style="position:absolute;left:1579px;top:1171.0px;height:28px;line-height:28px;font-size:22.7px;color:#3a3a3a;white-space:pre;text-align:left;">Fake lights selected world</div>
<svg style="position:absolute;left:1859px;top:1169px" width="28" height="28" viewBox="0 0 28 28"><rect x="1" y="1" width="26" height="26" rx="1.5" fill="#0b64be" stroke="#6fb0ea" stroke-width="2"/><path d="M6 14.5 L11.5 19.5 L22 9" fill="none" stroke="#8fd0ff" stroke-width="3.6" stroke-linecap="square"/></svg>
<div class="t" style="position:absolute;left:1892px;top:1171.0px;height:28px;line-height:28px;font-size:22.7px;color:#3a3a3a;white-space:pre;text-align:left;">Upgrade NearGrid large references to FarGrid</div>
<div class="t" style="position:absolute;left:595px;top:1222.0px;height:28px;line-height:28px;font-size:22.7px;color:#3a3a3a;white-space:pre;text-align:left;">Max tile size full</div>
<div style="position:absolute;left:775px;top:1215px;width:103px;height:41px;box-sizing:border-box;border:3px solid #d4d4d4;background:#fff"></div>
<div class="t" style="position:absolute;left:783px;top:1221.5px;height:28px;line-height:28px;font-size:22.7px;color:#3c3c3c;white-space:pre;text-align:left;">256</div>
<svg style="position:absolute;left:849px;top:1229.5px" width="18" height="12" viewBox="0 0 18 12"><path d="M2 3 L9 9 L16 3" fill="none" stroke="#a0a0a0" stroke-width="2.2"/></svg>
<div class="t" style="position:absolute;left:898px;top:1222.0px;height:28px;line-height:28px;font-size:22.7px;color:#3a3a3a;white-space:pre;text-align:left;">Max tile size billboard</div>
<div style="position:absolute;left:1129px;top:1215px;width:100px;height:41px;box-sizing:border-box;border:3px solid #d4d4d4;background:#fff"></div>
<div class="t" style="position:absolute;left:1137px;top:1221.5px;height:28px;line-height:28px;font-size:22.7px;color:#3c3c3c;white-space:pre;text-align:left;">1024</div>
<svg style="position:absolute;left:1200px;top:1229.5px" width="18" height="12" viewBox="0 0 18 12"><path d="M2 3 L9 9 L16 3" fill="none" stroke="#a0a0a0" stroke-width="2.2"/></svg>
<div class="t" style="position:absolute;left:1250px;top:1222.0px;height:28px;line-height:28px;font-size:22.7px;color:#3a3a3a;white-space:pre;text-align:left;">FarGridToLoad</div>
<div style="position:absolute;left:1420px;top:1215px;width:103px;height:41px;box-sizing:border-box;border:3px solid #d4d4d4;background:#fff"></div>
<div class="t" style="position:absolute;left:1428px;top:1221.5px;height:28px;line-height:28px;font-size:22.7px;color:#3c3c3c;white-space:pre;text-align:left;">21</div>
<svg style="position:absolute;left:1494px;top:1229.5px" width="18" height="12" viewBox="0 0 18 12"><path d="M2 3 L9 9 L16 3" fill="none" stroke="#a0a0a0" stroke-width="2.2"/></svg>
<svg style="position:absolute;left:1544px;top:1222px" width="28" height="28" viewBox="0 0 28 28"><rect x="1" y="1" width="26" height="26" rx="1.5" fill="#0b64be" stroke="#6fb0ea" stroke-width="2"/><path d="M6 14.5 L11.5 19.5 L22 9" fill="none" stroke="#8fd0ff" stroke-width="3.6" stroke-linecap="square"/></svg>
<div class="t" style="position:absolute;left:1579px;top:1222.0px;height:28px;line-height:28px;font-size:22.7px;color:#3a3a3a;white-space:pre;text-align:left;">Fake lights child world</div>
<div style="position:absolute;left:1752px;top:1191px;width:414px;height:45px;box-sizing:border-box;background:#fdfdfd;border-left:1px solid #e4e4e4;border-top:1px solid #ececec;border-right:4px solid #8c8c8c;border-bottom:4px solid #8c8c8c"></div>
<div class="t" style="position:absolute;left:1758px;top:1197.5px;height:30px;line-height:30px;font-size:24.3px;color:#444;white-space:pre;text-align:left;">Glow LOD windows react to daylight.</div>
<svg style="position:absolute;left:595px;top:1275px" width="28" height="28" viewBox="0 0 28 28"><rect x="1" y="1" width="26" height="26" rx="1.5" fill="#0b64be" stroke="#6fb0ea" stroke-width="2"/><path d="M6 14.5 L11.5 19.5 L22 9" fill="none" stroke="#8fd0ff" stroke-width="3.6" stroke-linecap="square"/></svg>
<div class="t" style="position:absolute;left:628px;top:1275.0px;height:28px;line-height:28px;font-size:22.7px;color:#3a3a3a;white-space:pre;text-align:left;">Occlusion data</div>
<svg style="position:absolute;left:898px;top:1275px" width="28" height="28" viewBox="0 0 28 28"><rect x="1" y="1" width="26" height="26" rx="1.5" fill="#0b64be" stroke="#6fb0ea" stroke-width="2"/><path d="M6 14.5 L11.5 19.5 L22 9" fill="none" stroke="#8fd0ff" stroke-width="3.6" stroke-linecap="square"/></svg>
<div class="t" style="position:absolute;left:933px;top:1275.0px;height:28px;line-height:28px;font-size:22.7px;color:#3a3a3a;white-space:pre;text-align:left;">Terrain underside</div>
<svg style="position:absolute;left:1253px;top:1275px" width="28" height="28" viewBox="0 0 28 28"><rect x="1" y="1" width="26" height="26" rx="1.5" fill="#0b64be" stroke="#6fb0ea" stroke-width="2"/><path d="M6 14.5 L11.5 19.5 L22 9" fill="none" stroke="#8fd0ff" stroke-width="3.6" stroke-linecap="square"/></svg>
<div class="t" style="position:absolute;left:1286px;top:1275.0px;height:28px;line-height:28px;font-size:22.7px;color:#3a3a3a;white-space:pre;text-align:left;">Grass LOD</div>
<div class="t" style="position:absolute;left:1469px;top:1275.0px;height:28px;line-height:28px;font-size:22.7px;color:#3a3a3a;white-space:pre;text-align:left;">Mode</div>
<svg style="position:absolute;left:1544px;top:1275px" width="28" height="28" viewBox="0 0 28 28"><rect x="1" y="1" width="26" height="26" rx="2.5" fill="#f3f3f3" stroke="#b4b4b4" stroke-width="2"/></svg>
<div class="t" style="position:absolute;left:1579px;top:1275.0px;height:28px;line-height:28px;font-size:22.7px;color:#3a3a3a;white-space:pre;text-align:left;">Seasons</div>
<svg style="position:absolute;left:1739px;top:1275px" width="28" height="28" viewBox="0 0 28 28"><rect x="1" y="1" width="26" height="26" rx="2.5" fill="#f7f7f7" stroke="#d8d8d8" stroke-width="2"/></svg>
<div class="t" style="position:absolute;left:1772px;top:1275.0px;height:28px;line-height:28px;font-size:22.7px;color:#b0b0b0;white-space:pre;text-align:left;">Snow</div>
<div class="t" style="position:absolute;left:595px;top:1328.0px;height:28px;line-height:28px;font-size:22.7px;color:#3a3a3a;white-space:pre;text-align:left;">Quality</div>
<div style="position:absolute;left:669px;top:1322px;width:63px;height:40px;box-sizing:border-box;border:3px solid #d4d4d4;background:#fff"></div>
<div class="t" style="position:absolute;left:677px;top:1328.0px;height:28px;line-height:28px;font-size:22.7px;color:#3c3c3c;white-space:pre;text-align:left;">3</div>
<svg style="position:absolute;left:703px;top:1336.0px" width="18" height="12" viewBox="0 0 18 12"><path d="M2 3 L9 9 L16 3" fill="none" stroke="#a0a0a0" stroke-width="2.2"/></svg>
<svg style="position:absolute;left:778px;top:1328px" width="28" height="28" viewBox="0 0 28 28"><rect x="1" y="1" width="26" height="26" rx="1.5" fill="#0b64be" stroke="#6fb0ea" stroke-width="2"/><path d="M6 14.5 L11.5 19.5 L22 9" fill="none" stroke="#8fd0ff" stroke-width="3.6" stroke-linecap="square"/></svg>
<div class="t" style="position:absolute;left:809px;top:1328.0px;height:28px;line-height:28px;font-size:22.7px;color:#3a3a3a;white-space:pre;text-align:left;">Plugin</div>
<div class="t" style="position:absolute;left:898px;top:1328.0px;height:28px;line-height:28px;font-size:22.7px;color:#3a3a3a;white-space:pre;text-align:left;">Quality</div>
<div style="position:absolute;left:975px;top:1322px;width:74px;height:40px;box-sizing:border-box;border:3px solid #d4d4d4;background:#fff"></div>
<div class="t" style="position:absolute;left:983px;top:1328.0px;height:28px;line-height:28px;font-size:22.7px;color:#3c3c3c;white-space:pre;text-align:left;">10</div>
<svg style="position:absolute;left:1020px;top:1336.0px" width="18" height="12" viewBox="0 0 18 12"><path d="M2 3 L9 9 L16 3" fill="none" stroke="#a0a0a0" stroke-width="2.2"/></svg>
<div class="t" style="position:absolute;left:1073px;top:1328.0px;height:28px;line-height:28px;font-size:22.7px;color:#3a3a3a;white-space:pre;text-align:left;">Height</div>
<div style="position:absolute;left:1143px;top:1322px;width:86px;height:40px;box-sizing:border-box;border:3px solid #d4d4d4;background:#fff"></div>
<div class="t" style="position:absolute;left:1151px;top:1328.0px;height:28px;line-height:28px;font-size:22.7px;color:#3c3c3c;white-space:pre;text-align:left;">500</div>
<svg style="position:absolute;left:1200px;top:1336.0px" width="18" height="12" viewBox="0 0 18 12"><path d="M2 3 L9 9 L16 3" fill="none" stroke="#a0a0a0" stroke-width="2.2"/></svg>
<div class="t" style="position:absolute;left:1250px;top:1328.0px;height:28px;line-height:28px;font-size:22.7px;color:#3a3a3a;white-space:pre;text-align:left;">Density</div>
<div style="position:absolute;left:1329px;top:1322px;width:87px;height:40px;box-sizing:border-box;border:3px solid #d4d4d4;background:#fff"></div>
<div class="t" style="position:absolute;left:1337px;top:1328.0px;height:28px;line-height:28px;font-size:22.7px;color:#3c3c3c;white-space:pre;text-align:left;">25</div>
<svg style="position:absolute;left:1387px;top:1336.0px" width="18" height="12" viewBox="0 0 18 12"><path d="M2 3 L9 9 L16 3" fill="none" stroke="#a0a0a0" stroke-width="2.2"/></svg>
<div style="position:absolute;left:1461px;top:1322px;width:62px;height:40px;box-sizing:border-box;border:3px solid #d4d4d4;background:#fff"></div>
<div class="t" style="position:absolute;left:1469px;top:1328.0px;height:28px;line-height:28px;font-size:22.7px;color:#3c3c3c;white-space:pre;text-align:left;">1</div>
<svg style="position:absolute;left:1494px;top:1336.0px" width="18" height="12" viewBox="0 0 18 12"><path d="M2 3 L9 9 L16 3" fill="none" stroke="#a0a0a0" stroke-width="2.2"/></svg>
<div style="position:absolute;left:1546px;top:1322px;width:285px;height:41px;box-sizing:border-box;border:2px solid #f0f0f0;background:#fbfbfb"></div>
<div style="position:absolute;left:1794px;top:1323px;width:37px;height:39px;box-sizing:border-box;border:2px dotted #e0e0e0"></div>
<div class="t" style="position:absolute;left:1556px;top:1328.0px;height:28px;line-height:28px;font-size:22.7px;color:#a8a8a8;white-space:pre;text-align:left;">Default</div>
<svg style="position:absolute;left:1803px;top:1336px" width="18" height="12" viewBox="0 0 18 12"><path d="M2 3 L9 9 L16 3" fill="none" stroke="#d6d6d6" stroke-width="2.2"/></svg>
<svg style="position:absolute;left:1859px;top:1328px" width="28" height="28" viewBox="0 0 28 28"><rect x="1" y="1" width="26" height="26" rx="1.5" fill="#0b64be" stroke="#6fb0ea" stroke-width="2"/><path d="M6 14.5 L11.5 19.5 L22 9" fill="none" stroke="#8fd0ff" stroke-width="3.6" stroke-linecap="square"/></svg>
<div class="t" style="position:absolute;left:1892px;top:1328.0px;height:28px;line-height:28px;font-size:22.7px;color:#3a3a3a;white-space:pre;text-align:left;">Parent &gt; child</div>
<div class="t" style="position:absolute;left:2073px;top:1328.0px;height:28px;line-height:28px;font-size:22.7px;color:#3a3a3a;white-space:pre;text-align:left;">Child &gt; parent</div>
<div style="position:absolute;left:2230px;top:1322px;width:132px;height:40px;box-sizing:border-box;border:3px solid #d4d4d4;background:#fff"></div>
<div class="t" style="position:absolute;left:2238px;top:1328.0px;height:28px;line-height:28px;font-size:22.7px;color:#3c3c3c;white-space:pre;text-align:left;">High</div>
<svg style="position:absolute;left:2333px;top:1336.0px" width="18" height="12" viewBox="0 0 18 12"><path d="M2 3 L9 9 L16 3" fill="none" stroke="#a0a0a0" stroke-width="2.2"/></svg>
<div style="position:absolute;left:580px;top:1412px;width:152px;height:50px;box-sizing:border-box;border:2px solid #dedede;border-radius:5px;background:#fdfdfd"></div>
<div class="t" style="position:absolute;left:580px;top:1423.0px;width:152px;height:28px;line-height:28px;font-size:22.5px;color:#3a3a3a;white-space:pre;text-align:center;">Save preset</div>
<div style="position:absolute;left:748px;top:1412px;width:152px;height:50px;box-sizing:border-box;border:2px solid #dedede;border-radius:5px;background:#fdfdfd"></div>
<div class="t" style="position:absolute;left:748px;top:1423.0px;width:152px;height:28px;line-height:28px;font-size:22.5px;color:#3a3a3a;white-space:pre;text-align:center;">Load preset</div>
<div style="position:absolute;left:916px;top:1412px;width:152px;height:50px;box-sizing:border-box;border:2px solid #dedede;border-radius:5px;background:#fdfdfd"></div>
<div class="t" style="position:absolute;left:916px;top:1423.0px;width:152px;height:28px;line-height:28px;font-size:22.5px;color:#3a3a3a;white-space:pre;text-align:center;">Default</div>
<div style="position:absolute;left:1609px;top:1412px;width:151px;height:50px;box-sizing:border-box;border:2px solid #dedede;border-radius:5px;background:#fdfdfd"></div>
<div class="t" style="position:absolute;left:1609px;top:1420.5px;width:151px;height:33px;line-height:33px;font-size:26.5px;color:#2a2a2a;white-space:pre;text-align:center;">Help</div>
<div style="position:absolute;left:1783px;top:1412px;width:250px;height:50px;box-sizing:border-box;border:2px solid #dedede;border-radius:5px;background:#fdfdfd"></div>
<div class="t" style="position:absolute;left:1783px;top:1419.5px;width:250px;height:35px;line-height:35px;font-size:28px;color:#2a2a2a;white-space:pre;text-align:center;">Wizard &lt;&lt;&lt;</div>
<div style="position:absolute;left:2054px;top:1412px;width:151px;height:50px;box-sizing:border-box;border:2px solid #dedede;border-radius:5px;background:#fdfdfd"></div>
<div class="t" style="position:absolute;left:2054px;top:1423.0px;width:151px;height:28px;line-height:28px;font-size:22px;color:#2a2a2a;white-space:pre;text-align:center;">OK</div>
<div style="position:absolute;left:2225px;top:1412px;width:153px;height:50px;box-sizing:border-box;border:2px solid #dedede;border-radius:5px;background:#fdfdfd"></div>
<div class="t" style="position:absolute;left:2225px;top:1420.5px;width:153px;height:33px;line-height:33px;font-size:26.5px;color:#2a2a2a;white-space:pre;text-align:center;">Cancel</div>
<svg style="position:absolute;left:1751px;top:1129px" width="24" height="36" viewBox="0 0 24 36"><path d="M2 2 L2 26 L7.5 20.5 L12 30 L15.5 28.5 L11 19.5 L18.5 19.5 Z" fill="#ffffff" stroke="#a8a8a8" stroke-width="1.5" stroke-linejoin="round" opacity="0.9"/></svg>
<svg style="position:absolute;left:0;top:0" width="2966" height="1681" viewBox="0 0 2966 1681"><path d="M1266 1251 Q1250 1252 1237 1260 Q1255 1261 1273 1257 Q1300 1256 1339 1259 Q1380 1262 1411 1267 Q1470 1270 1532 1269 Q1533 1290 1534 1310 Q1537 1340 1536 1360 Q1536 1380 1524 1390 Q1505 1398 1484 1399 Q1440 1401 1405 1402 Q1340 1405 1305 1407 Q1280 1406 1265 1399 Q1245 1392 1236 1382 Q1229 1365 1229 1345 Q1231 1325 1231 1308 Q1228 1290 1227 1276 Q1228 1265 1237 1260" fill="none" stroke="#ff0a0a" stroke-width="4.6" stroke-linecap="round" stroke-linejoin="round"/></svg>
</div></body></html>
